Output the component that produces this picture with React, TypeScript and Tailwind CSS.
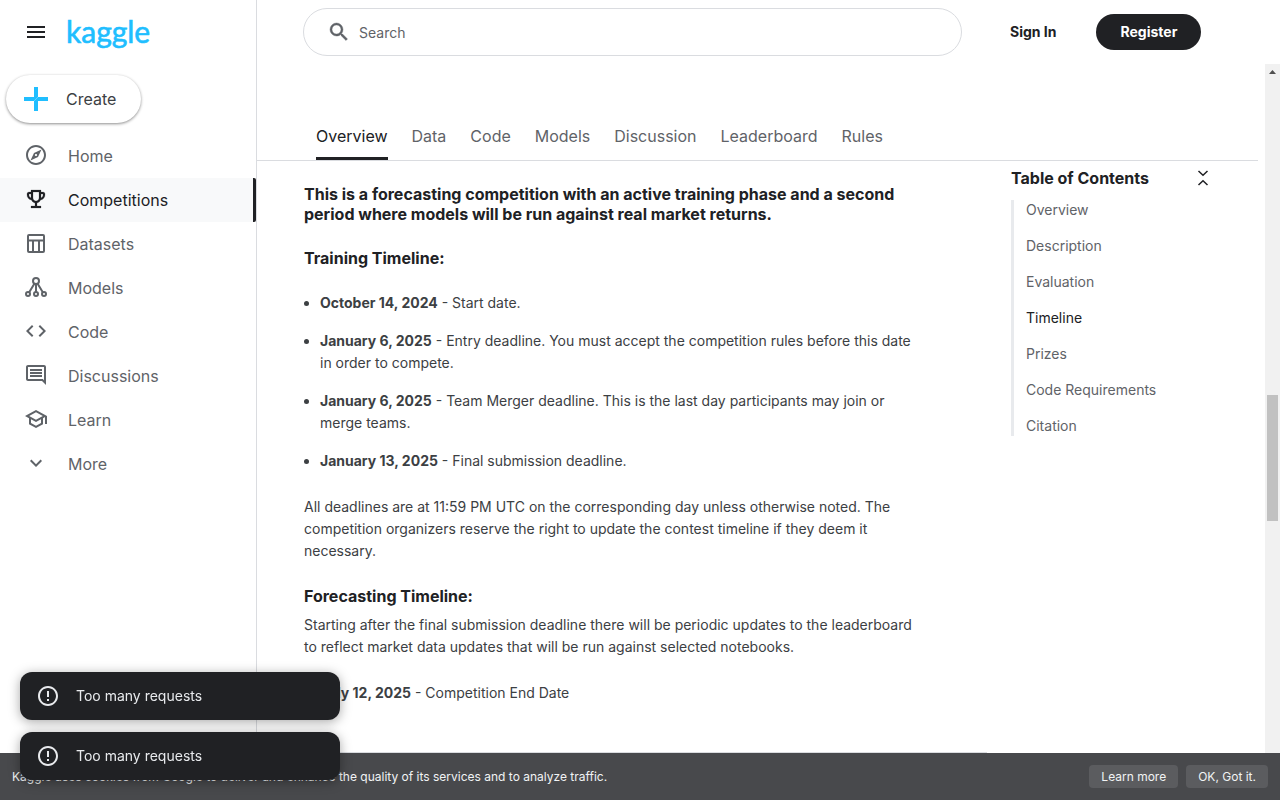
import React from 'react';
import { MdCode, MdErrorOutline, MdExpandMore, MdMenu, MdOutlineComment, MdOutlineExplore, MdOutlineSchool } from 'react-icons/md';

const iconClass = 'mb-0.5 size-6';

function TrophyIcon() {
  return (
    <svg viewBox="0 0 24 24" className={iconClass} fill="currentColor" stroke="currentColor" strokeWidth="0.2" aria-hidden="true">
      <path d="M19 5h-2V3H7v2H5c-1.100 0-2 .9-2 2v1c0 2.550 1.920 4.630 4.390 4.940.63 1.500 1.980 2.630 3.610 2.960V19H7v2h10v-2h-4v-3.100c1.630-.33 2.980-1.460 3.610-2.960C19.080 12.630 21 10.550 21 8V7c0-1.100-.9-2-2-2zM5 8V7h2v3.820C5.840 10.400 5 9.300 5 8zm7 6c-1.650 0-3-1.350-3-3V5h6v6c0 1.650-1.350 3-3 3zm7-6c0 1.300-.84 2.400-2 2.820V7h2v1z" />
    </svg>
  );
}

function TableIcon() {
  return (
    <svg viewBox="0 0 24 24" className={iconClass} fill="none" stroke="currentColor" strokeWidth="2" aria-hidden="true">
      <rect x="4" y="4" width="16" height="17" rx="1" />
      <path d="M4 9.500h16M9 9.500V21M15 9.500V21" />
    </svg>
  );
}

function ModelsIcon() {
  return (
    <svg viewBox="0 0 24 24" className={iconClass} fill="none" stroke="currentColor" strokeWidth="2" aria-hidden="true">
      <circle cx="12" cy="6" r="3" />
      <circle cx="4" cy="19" r="2" />
      <circle cx="12" cy="19" r="2" />
      <circle cx="20" cy="19" r="2" />
      <path d="M12 9v8M10.500 8.500 5.200 17.300M13.500 8.500l5.300 8.800" />
    </svg>
  );
}

function SearchIcon() {
  return (
    <svg viewBox="0 0 24 24" className="size-6" fill="currentColor" stroke="currentColor" strokeWidth="0.4" aria-hidden="true">
      <path d="M15.500 14h-.79l-.28-.27A6.471 6.471 0 0 0 16 9.500 6.500 6.500 0 1 0 9.500 16c1.610 0 3.090-.59 4.230-1.570l.27.28v.79l5 4.990L20.490 19l-4.990-5zm-6 0C7.010 14 5 11.990 5 9.500S7.010 5 9.500 5 14 7.010 14 9.500 11.990 14 9.500 14z" />
    </svg>
  );
}

const nav = [
  { label: 'Home', icon: <MdOutlineExplore className={iconClass} /> },
  { label: 'Competitions', icon: <TrophyIcon />, active: true },
  { label: 'Datasets', icon: <TableIcon /> },
  { label: 'Models', icon: <ModelsIcon /> },
  { label: 'Code', icon: <MdCode className={iconClass} /> },
  { label: 'Discussions', icon: <MdOutlineComment className={iconClass} /> },
  { label: 'Learn', icon: <MdOutlineSchool className={iconClass} /> },
  { label: 'More', icon: <MdExpandMore className={iconClass} /> },
];
const tabs = ['Overview', 'Data', 'Code', 'Models', 'Discussion', 'Leaderboard', 'Rules'];
const toc = ['Overview', 'Description', 'Evaluation', 'Timeline', 'Prizes', 'Code Requirements', 'Citation'];
const deadlines = [
  ['October 14, 2024', 'Start date.'],
  ['January 6, 2025', 'Entry deadline. You must accept the competition rules before this date in order to compete.'],
  ['January 6, 2025', 'Team Merger deadline. This is the last day participants may join or merge teams.'],
  ['January 13, 2025', 'Final submission deadline.'],
];

function Sidebar() {
  return (
    <aside className="w-[257px] shrink-0 border-r border-[#dadce0]">
      <div className="flex h-16 items-center pl-6">
        <button aria-label="Menu" className="text-[#202124]">
          <MdMenu className="size-6" />
        </button>
        <a href="#" className="mb-0.5 ml-[18px] font-[Lato,sans-serif] text-[30px] leading-8 text-[#20beff] [-webkit-text-stroke:0.6px_#20beff]">
          kaggle
        </a>
      </div>
      <button className="mt-[11px] ml-1.5 flex h-12 items-center gap-[18px] rounded-full bg-white pr-[25px] pl-[18px] text-base text-[#3c4043] shadow-[0_1px_3px_rgba(0,0,0,0.45)]">
        <svg viewBox="0 0 24 24" className="size-6" fill="#20beff" aria-hidden="true">
          <path d="M10 0h4v10h10v4H14v10h-4V14H0v-4h10z" />
          <path d="M10 14l4-4" stroke="#fff" strokeWidth="0.3" />
        </svg>
        Create
      </button>
      <nav className="mt-[11px]">
        {nav.map((item) => (
          <a
            key={item.label}
            href="#"
            className={
              item.active
                ? 'flex h-11 items-center gap-5 rounded-r-[2px] border-r-[3px] border-[#202124] bg-[#f8f9fa] pl-6 text-[#202124]'
                : 'flex h-11 items-center gap-5 pl-6 text-[#5f6368]'
            }
          >
            {item.icon}
            {item.label}
          </a>
        ))}
      </nav>
    </aside>
  );
}

function Header() {
  return (
    <header className="flex h-16 shrink-0 items-center pl-[46px]">
      <label className="flex h-12 w-full max-w-[659px] items-center gap-2 rounded-full border border-[#dadce0] pl-[23px] text-[#5f6368]">
        <SearchIcon />
        <input type="search" aria-label="Search" placeholder="Search" className="min-w-0 flex-1 pt-0.5 text-sm outline-none placeholder:text-[#5f6368]" />
      </label>
      <button className="ml-12 shrink-0 text-sm font-bold text-[#202124]">Sign In</button>
      <button className="ml-10 h-9 shrink-0 rounded-full bg-[#202124] px-6 text-sm font-bold text-white">Register</button>
    </header>
  );
}

function Article() {
  return (
    <article className="w-[683px] border-b border-[#dadce0] pt-[23px] pr-[70px] text-sm leading-[22px] text-[#3c4043]">
      <h3 className="text-base leading-5 font-bold text-[#202124]">
        This is a forecasting competition with an active training phase and a second period where models will be run against real market returns.
      </h3>
      <h3 className="mt-6 text-base leading-5 font-bold text-[#202124]">Training Timeline:</h3>
      <ul className="mt-6 flex list-disc flex-col gap-4 pl-4">
        {deadlines.map(([date, text]) => (
          <li key={date + text}>
            <strong>{date}</strong> - {text}
          </li>
        ))}
      </ul>
      <p className="mt-6">
        All deadlines are at 11:59 PM UTC on the corresponding day unless otherwise noted. The competition organizers reserve the right to update the contest timeline if they deem it necessary.
      </p>
      <h3 className="mt-6 text-base leading-5 font-bold text-[#202124]">Forecasting Timeline:</h3>
      <p className="mt-2">
        Starting after the final submission deadline there will be periodic updates to the leaderboard to reflect market data updates that will be run against selected notebooks.
      </p>
      <ul className="mt-6 list-disc pl-4">
        <li>
          <strong>July 12, 2025</strong> - Competition End Date
        </li>
      </ul>
    </article>
  );
}

function Contents() {
  return (
    <aside className="ml-6 w-[204px] shrink-0 pt-[7px]">
      <div className="flex h-5 items-center justify-between">
        <h2 className="text-base font-bold text-[#202124]">Table of Contents</h2>
        <button aria-label="Collapse" className="text-[#202124]">
          <svg viewBox="0 0 24 24" className="size-6" fill="none" stroke="currentColor" strokeWidth="1.5" aria-hidden="true">
            <path d="M7.500 5l4.500 4.300L16.500 5M7.500 19l4.500-4.300 4.500 4.300" />
          </svg>
        </button>
      </div>
      <ul className="mt-3 flex flex-col gap-4 border-l-[3px] border-[#e8eaed] pl-3 text-sm leading-5">
        {toc.map((item) => (
          <li key={item}>
            <a href="#" className={item === 'Timeline' ? 'text-[#202124]' : 'text-[#5f6368]'}>
              {item}
            </a>
          </li>
        ))}
      </ul>
    </aside>
  );
}

function Scrollbar() {
  return (
    <div className="flex w-[15px] shrink-0 flex-col items-center bg-[#f1f1f1]" aria-hidden="true">
      <svg viewBox="0 0 15 15" className="size-[15px]" fill="#505050">
        <path d="M4 10h7L7.500 6z" />
      </svg>
      <div className="mt-[316px] h-[126px] w-[11px] bg-[#c1c1c1]" />
    </div>
  );
}

function Toast() {
  return (
    <div role="alert" className="flex h-12 items-center gap-4 rounded-xl bg-[#202124] pl-4 text-sm text-[#e8eaed] shadow-[0_2px_12px_rgba(0,0,0,0.35)]">
      <MdErrorOutline className="size-6" />
      Too many requests
    </div>
  );
}

export default function App() {
  return (
    <div className="flex h-screen flex-col bg-white font-[Inter,sans-serif] text-base">
      <div className="flex min-h-0 flex-1 overflow-hidden">
        <Sidebar />
        <div className="flex min-w-0 flex-1 flex-col">
          <Header />
          <div className="flex min-h-0 flex-1">
            <main className="mr-[7px] flex min-w-0 flex-1 flex-col">
              <nav className="mt-12 flex h-[49px] shrink-0 gap-6 border-b border-[#dadce0] pl-[59px]">
                {tabs.map((tab) => (
                  <a
                    key={tab}
                    href="#"
                    className={
                      tab === 'Overview'
                        ? 'rounded-t-[2px] border-b-[3px] border-[#202124] leading-[48px] text-[#202124]'
                        : 'leading-[48px] text-[#5f6368]'
                    }
                  >
                    {tab}
                  </a>
                ))}
              </nav>
              <div className="flex min-h-0 flex-1 pl-[47px]">
                <Article />
                <Contents />
              </div>
            </main>
            <Scrollbar />
          </div>
        </div>
      </div>
      <footer className="flex h-[47px] shrink-0 items-center gap-2 bg-[#48494c] px-3 text-xs text-[#f1f3f4]">
        <p className="flex-1">Kaggle uses cookies from Google to deliver and enhance the quality of its services and to analyze traffic.</p>
        <a href="#" className="rounded bg-[#5b5c5f] px-3 leading-[23px]">
          Learn more
        </a>
        <button className="rounded bg-[#5b5c5f] px-3 leading-[23px]">OK, Got it.</button>
      </footer>
      <div className="fixed bottom-5 left-5 flex w-80 flex-col gap-3">
        <Toast />
        <Toast />
      </div>
    </div>
  );
}
